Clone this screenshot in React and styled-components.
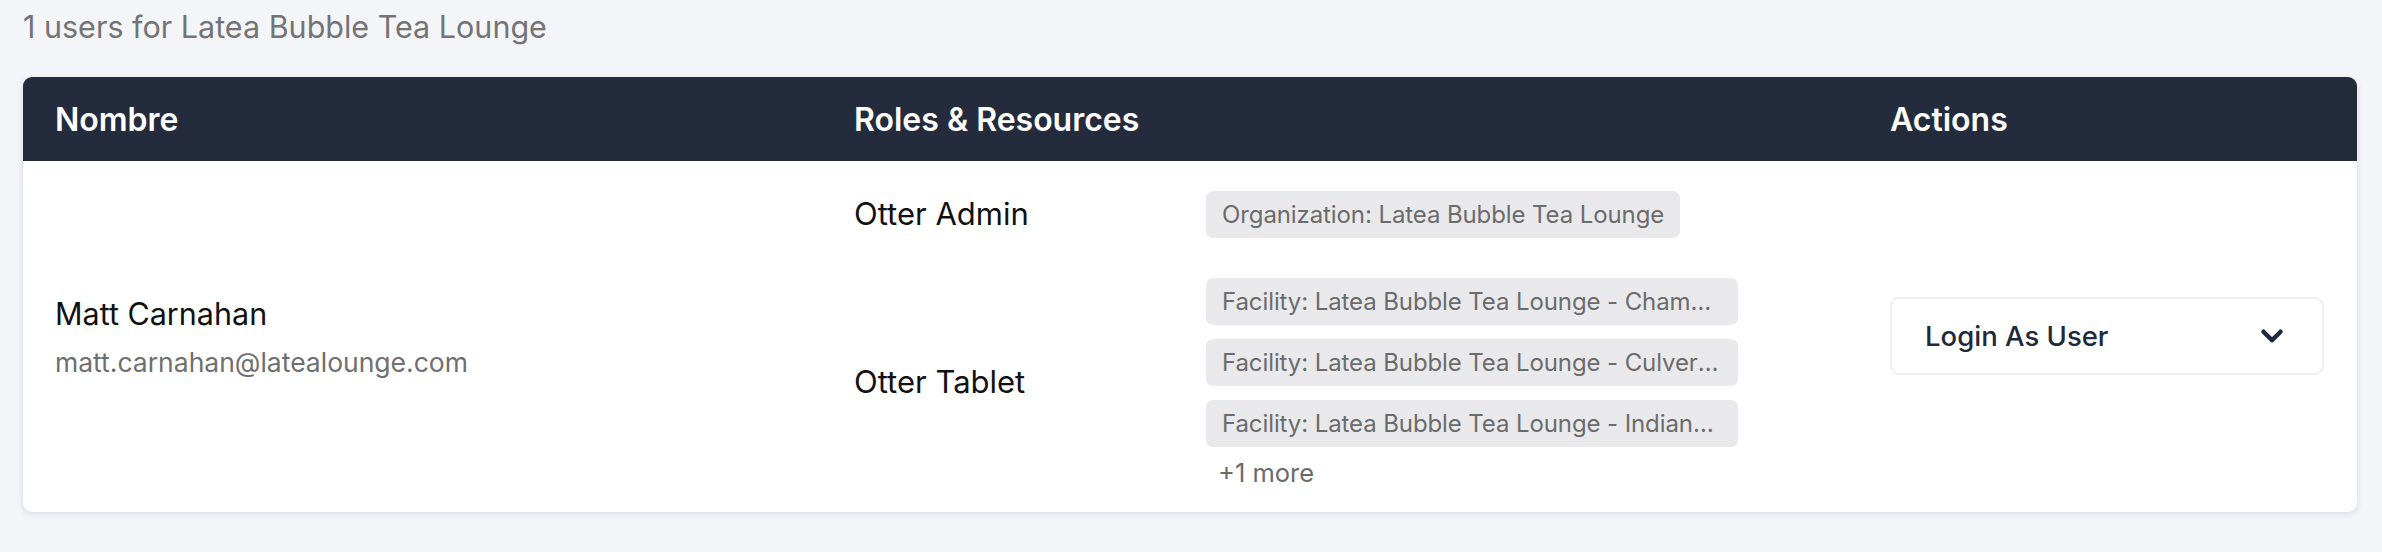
import React from "react";
import styled, { createGlobalStyle } from "styled-components";
import { ChevronDown } from "lucide-react";

const GlobalStyle = createGlobalStyle`
  body {
    margin: 0;
    background: #f4f5f9;
    font-family: Inter, "Noto Sans", sans-serif;
  }
`;

// one user with their role groups
const users = [
  {
    name: "Matt Carnahan",
    email: "matt.carnahan@latealounge.com",
    roles: [
      { role: "Otter Admin", resources: ["Organization: Latea Bubble Tea Lounge"], more: 0 },
      {
        role: "Otter Tablet",
        resources: [
          "Facility: Latea Bubble Tea Lounge - Champaign",
          "Facility: Latea Bubble Tea Lounge - Culver City",
          "Facility: Latea Bubble Tea Lounge - Indianapolis",
        ],
        more: 1,
      },
    ],
  },
];

const App = () => {
  return (
    <Page>
      <GlobalStyle />
      <Title>{users.length} users for Latea Bubble Tea Lounge</Title>
      <Card>
        <HeaderRow>
          <HeadCell>Nombre</HeadCell>
          <HeadCell>Roles &amp; Resources</HeadCell>
          <HeadCell>Actions</HeadCell>
        </HeaderRow>
        {users.map((user) => (
          <Row key={user.email}>
            <NameCell>
              <Name>{user.name}</Name>
              <Email>{user.email}</Email>
            </NameCell>
            <RolesCell>
              {user.roles.map((group) => (
                <RoleGroup key={group.role}>
                  <RoleName>{group.role}</RoleName>
                  <Chips>
                    {group.resources.map((res) => (
                      <Chip key={res}>{res}</Chip>
                    ))}
                    {group.more > 0 && <More>+{group.more} more</More>}
                  </Chips>
                </RoleGroup>
              ))}
            </RolesCell>
            <ActionCell>
              <SelectButton type="button">
                <span>Login As User</span>
                <ChevronDown size={34} strokeWidth={3.2} />
              </SelectButton>
            </ActionCell>
          </Row>
        ))}
      </Card>
    </Page>
  );
};

export default App;

const Page = styled.div`
  padding: 8px 25px 40px 23px;
`;

const Title = styled.div`
  font-size: 30.5px;
  line-height: 38px;
  color: #747474;
  margin-bottom: 31px;
`;

const Card = styled.div`
  background: #fff;
  border-radius: 9px;
  overflow: hidden;
  box-shadow: 0 2px 6px rgba(20, 30, 50, 0.12);
`;

const HeaderRow = styled.div`
  display: grid;
  grid-template-columns: 799px 1036px 1fr;
  background: #232b3c;
  height: 84px;
  align-items: center;
`;

const HeadCell = styled.div`
  padding: 0 32px;
  color: #fff;
  font-size: 32px;
  font-weight: 600;
`;

const Row = styled.div`
  display: grid;
  grid-template-columns: 799px 1036px 1fr;
  align-items: center;
  padding: 30px 0 24px;
`;

const NameCell = styled.div`
  padding: 0 32px 7px;
  display: flex;
  flex-direction: column;
  gap: 14px;
`;

const Name = styled.div`
  font-size: 30.5px;
  color: #111;
`;

const Email = styled.div`
  font-size: 26.5px;
  color: #6f6f6f;
`;

const RolesCell = styled.div`
  padding: 0 32px;
  display: flex;
  flex-direction: column;
  gap: 40px;
`;

const RoleGroup = styled.div`
  display: flex;
  align-items: center;
`;

const RoleName = styled.div`
  width: 352px;
  flex-shrink: 0;
  padding-bottom: 3px;
  font-size: 31px;
  color: #111;
`;

const Chips = styled.div`
  display: flex;
  flex-direction: column;
  align-items: flex-start;
  gap: 14px;
`;

const Chip = styled.div`
  max-width: 532px;
  box-sizing: border-box;
  height: 47px;
  line-height: 47px;
  padding: 0 16px;
  border-radius: 7px;
  background: #e9e9ec;
  color: #6b6b6b;
  font-size: 24px;
  letter-spacing: -0.1px;
  white-space: nowrap;
  overflow: hidden;
  text-overflow: ellipsis;
`;

const More = styled.div`
  font-size: 25.5px;
  color: #6b6b6b;
  padding-left: 12px;
  margin-top: -4px;
`;

const ActionCell = styled.div`
  padding: 0 33px 7px 32px;
`;

const SelectButton = styled.button`
  width: 100%;
  height: 78px;
  display: flex;
  align-items: center;
  justify-content: space-between;
  padding: 0 33px 0 33px;
  background: #fff;
  border: 2px solid #eceef1;
  border-radius: 9px;
  font-family: inherit;
  font-size: 27.5px;
  font-weight: 500;
  color: #1e293b;
  cursor: pointer;
`;
